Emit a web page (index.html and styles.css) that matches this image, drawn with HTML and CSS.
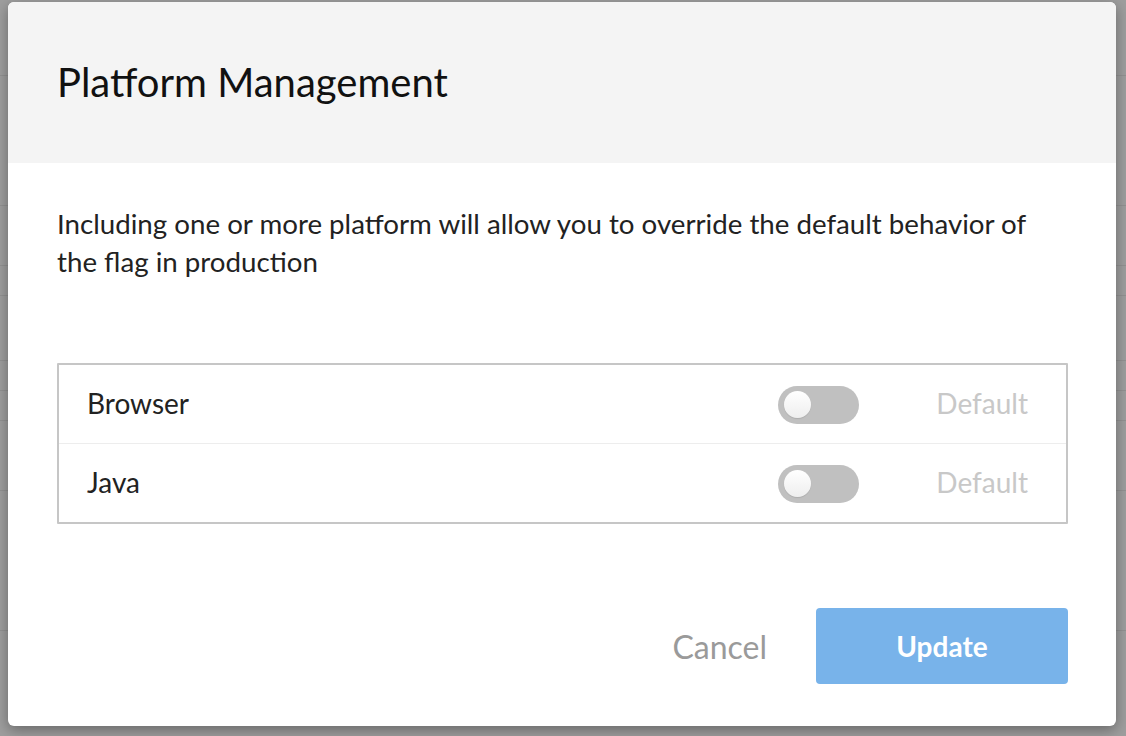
FILE: index.html
```html
<!DOCTYPE html>
<html>
<head>
<meta charset="utf-8">
<link rel="stylesheet" href="styles.css">
</head>
<body>
<div class="backdrop">
  <div class="bg-row r1"></div>
  <div class="bg-row r2"></div>
  <div class="bg-row r3"></div>
  <div class="bg-row r4"></div>
  <div class="bg-row r5"></div>
  <div class="bg-row r6"></div>
  <div class="bg-row r7"></div>
  <div class="bg-row r8"></div>
  <div class="bg-row r9"></div>
</div>
<div class="modal">
  <div class="modal-header">
    <h1 class="title">Platform Management</h1>
  </div>
  <div class="modal-body">
    <p class="desc">Including one or more platform will allow you to override the default behavior of the flag in production</p>
    <div class="platforms">
      <div class="platform-row">
        <span class="name">Browser</span>
        <span class="toggle"><span class="knob"></span></span>
        <span class="state">Default</span>
      </div>
      <div class="platform-row">
        <span class="name">Java</span>
        <span class="toggle"><span class="knob"></span></span>
        <span class="state">Default</span>
      </div>
    </div>
  </div>
  <div class="modal-footer">
    <button class="btn-cancel">Cancel</button>
    <button class="btn-update">Update</button>
  </div>
</div>
</body>
</html>
```
FILE: styles.css
```css
html, body {
  margin: 0;
  padding: 0;
  width: 1126px;
  height: 736px;
  overflow: hidden;
}
body {
  background: #9e9e9e;
  font-family: Lato, "Noto Sans", sans-serif;
  position: relative;
}
.backdrop {
  position: absolute;
  inset: 0;
}
.bg-row {
  position: absolute;
  left: 0;
  right: 0;
  height: 1px;
  background: #929292;
}
.r1 { top: 75px; }
.r2 { top: 205px; }
.r3 { top: 265px; }
.r4 { top: 295px; }
.r5 { top: 360px; }
.r6 { top: 390px; }
.r7 { top: 420px; }
.r8 { top: 490px; }
.r9 { top: 630px; }

.modal {
  position: absolute;
  left: 8px;
  top: 2px;
  width: 1108px;
  height: 724px;
  background: #fff;
  border-radius: 6px;
  box-shadow: 0 4px 14px rgba(0,0,0,0.35);
  overflow: hidden;
  display: flex;
  flex-direction: column;
}
.modal-header {
  background: #f4f4f4;
  height: 161px;
  padding: 0 49px;
  display: flex;
  align-items: center;
  box-sizing: border-box;
}
.title {
  margin: 0;
  font-weight: 400;
  font-size: 40px;
  color: #111;
  line-height: 1;
  padding-bottom: 2px;
}
.modal-body {
  padding: 42px 48px 0 49px;
}
.desc {
  margin: 0;
  font-size: 27.7px;
  line-height: 38px;
  color: #222;
}
.platforms {
  margin-top: 82px;
  border: 2px solid #c6c6c6;
  border-radius: 1px;
}
.platform-row {
  display: flex;
  align-items: center;
  height: 78px;
  padding: 0 38px 0 28px;
}
.platform-row + .platform-row {
  border-top: 1px solid #ededed;
}
.name {
  flex: 1;
  font-size: 28px;
  color: #222;
  padding-bottom: 3px;
}
.toggle {
  width: 81px;
  height: 38px;
  border-radius: 19px;
  background: #c0c0c0;
  display: flex;
  align-items: center;
  padding-left: 6px;
  box-sizing: border-box;
  margin-right: 77px;
  margin-top: 1px;
}
.knob {
  width: 27px;
  height: 27px;
  border-radius: 50%;
  background: linear-gradient(#ffffff, #eeeeee);
  box-shadow: 0 1px 1px rgba(0,0,0,0.1);
}
.state {
  font-size: 28px;
  color: #c8c8c8;
  padding-bottom: 3px;
}
.modal-footer {
  margin-top: auto;
  display: flex;
  justify-content: flex-end;
  align-items: center;
  padding: 0 48px 42px 0;
}
.btn-cancel {
  border: 0;
  background: none;
  font-family: inherit;
  font-size: 32px;
  color: #9a9a9a;
  padding: 0;
  margin-right: 49px;
}
.btn-update {
  border: 0;
  width: 252px;
  height: 76px;
  border-radius: 4px;
  background: #78b3ea;
  color: #fff;
  font-family: inherit;
  font-weight: 700;
  font-size: 28px;
}
```
